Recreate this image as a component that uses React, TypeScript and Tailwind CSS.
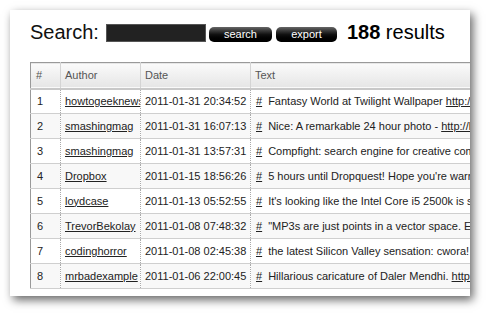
import React from "react";

const rows: { n: number; author: string; date: string; text: string; link?: string }[] = [
  { n: 1, author: "howtogeeknews", date: "2011-01-31 20:34:52", text: "Fantasy World at Twilight Wallpaper ", link: "http://htg.me/fantasy" },
  { n: 2, author: "smashingmag", date: "2011-01-31 16:07:13", text: "Nice: A remarkable 24 hour photo - ", link: "http://bit.ly/hxW2sd" },
  { n: 3, author: "smashingmag", date: "2011-01-31 13:57:31", text: "Compfight: search engine for creative commons photos" },
  { n: 4, author: "Dropbox", date: "2011-01-15 18:56:26", text: "5 hours until Dropquest! Hope you're warmed up" },
  { n: 5, author: "loydcase", date: "2011-01-13 05:52:55", text: "It's looking like the Intel Core i5 2500k is sweet" },
  { n: 6, author: "TrevorBekolay", date: "2011-01-08 07:48:32", text: "\"MP3s are just points in a vector space. Everything" },
  { n: 7, author: "codinghorror", date: "2011-01-08 02:45:38", text: "the latest Silicon Valley sensation: cwora! ", link: "http://cwora.com" },
  { n: 8, author: "mrbadexample", date: "2011-01-06 22:00:45", text: "Hillarious caricature of Daler Mendhi. ", link: "http://bit.ly/daler" },
];

export default function App() {
  return (
    <div className="w-[488px] h-[314px] bg-white pl-[10px] pt-[10px]" style={{ fontFamily: '"Liberation Sans", Arial, sans-serif' }}>
      <div className="w-[460px] h-[286px] bg-white overflow-hidden shadow-[3px_4px_9px_rgba(0,0,0,0.6)] pl-[20px] pt-[10px]">
        <div className="flex items-center h-[26px] whitespace-nowrap">
          <span className="text-[20px] text-[#111] leading-none mr-[7px] -mt-[3px]">Search:</span>
          <div className="w-[100px] h-[18px] bg-[#222] border border-[#555]" />
          <button className="ml-[3px] mt-[3px] w-[63px] h-[15px] rounded-[5px] bg-linear-to-b from-[#666] via-[#111] to-[#000] text-white text-[11px] leading-[15px]">search</button>
          <button className="ml-[4px] mt-[3px] w-[61px] h-[15px] rounded-[5px] bg-linear-to-b from-[#666] via-[#111] to-[#000] text-white text-[11px] leading-[15px]">export</button>
          <span className="ml-[10px] text-[20px] text-black leading-none -mt-[3px]"><b>188</b> results</span>
        </div>
        <table className="mt-[16px] table-fixed border-collapse text-[11px] text-[#222] border-l border-[#999]" style={{ width: 520 }}>
          <colgroup>
            <col style={{ width: 30 }} />
            <col style={{ width: 80 }} />
            <col style={{ width: 110 }} />
            <col style={{ width: 300 }} />
          </colgroup>
          <thead>
            <tr className="h-[26px] bg-linear-to-b from-[#fafafa] to-[#e6e6e6] border-t border-[#999] border-b-2 border-b-[#c8c8c8] text-[#555]">
              <th className="text-left font-normal pl-[5px] border-r border-[#d4d4d4]">#</th>
              <th className="text-left font-normal pl-[4px] border-r border-[#d4d4d4]">Author</th>
              <th className="text-left font-normal pl-[4px] border-r border-[#d4d4d4]">Date</th>
              <th className="text-left font-normal pl-[4px]">Text</th>
            </tr>
          </thead>
          <tbody>
            {rows.map((r, i) => (
              <tr key={r.n} className={`h-[25px] border-b border-[#cfcfcf] ${i % 2 === 1 ? "bg-[#f8f8f8]" : "bg-white"}`}>
                <td className="pl-[6px] border-r border-dotted border-[#aaa] whitespace-nowrap overflow-hidden">{r.n}</td>
                <td className="pl-[4px] border-r border-dotted border-[#aaa] whitespace-nowrap overflow-hidden"><a className="underline text-[#222]">{r.author}</a></td>
                <td className="pl-[4px] border-r border-dotted border-[#aaa] whitespace-nowrap overflow-hidden">{r.date}</td>
                <td className="pl-[5px] whitespace-nowrap overflow-hidden">
                  <a className="underline mr-[6px]">#</a>
                  {r.text}
                  {r.link && <a className="underline">{r.link}</a>}
                </td>
              </tr>
            ))}
          </tbody>
        </table>
      </div>
    </div>
  );
}
